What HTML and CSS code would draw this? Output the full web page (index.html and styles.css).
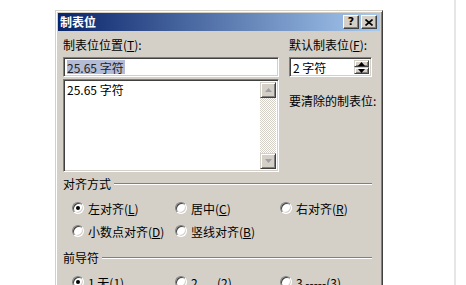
FILE: index.html
```html
<!DOCTYPE html>
<html lang="zh-CN">
<head>
  <meta charset="UTF-8">
  <title>制表位</title>
  <link rel="stylesheet" href="styles.css">
</head>
<body>
  <div class="page">
    <div class="dialog">
      <div class="titlebar">
        <span class="title">制表位</span>
        <div class="caption-btns">
          <span class="cap-btn help">?</span>
          <span class="cap-btn close">
            <svg width="8" height="7" viewBox="0 0 8 7"><path d="M0.5 0.5 L7.5 6.5 M7.5 0.5 L0.5 6.5" stroke="#000" stroke-width="1.6"/></svg>
          </span>
        </div>
      </div>

      <div class="dlg-body">
        <div class="top">
          <div class="col-left">
            <div class="label">制表位位置(<u>T</u>):</div>
            <div class="textbox"><span class="sel">25.65 字符</span></div>
            <div class="listbox">
              <div class="list-items">
                <div class="item">25.65 字符</div>
              </div>
              <div class="scrollbar">
                <span class="sb-btn">
                  <svg width="7" height="4" viewBox="0 0 7 4"><path d="M3.5 0 L7 4 L0 4 Z" fill="#a0a0a0"/></svg>
                </span>
                <span class="sb-track"></span>
                <span class="sb-btn">
                  <svg width="7" height="4" viewBox="0 0 7 4"><path d="M0 0 L7 0 L3.5 4 Z" fill="#a0a0a0"/></svg>
                </span>
              </div>
            </div>
          </div>

          <div class="col-right">
            <div class="label">默认制表位(<u>F</u>):</div>
            <div class="spinner">
              <span class="spin-value">2 字符</span>
              <div class="spin-btns">
                <span class="spin-btn">
                  <svg width="7" height="4" viewBox="0 0 7 4"><path d="M3.5 0 L7 4 L0 4 Z" fill="#000"/></svg>
                </span>
                <span class="spin-btn">
                  <svg width="7" height="4" viewBox="0 0 7 4"><path d="M0 0 L7 0 L3.5 4 Z" fill="#000"/></svg>
                </span>
              </div>
            </div>
            <div class="label clear-label">要清除的制表位:</div>
          </div>
        </div>

        <div class="group-head">
          <span class="group-title">对齐方式</span>
          <span class="etched"></span>
        </div>
        <div class="radios">
          <div class="radio"><span class="dot checked"></span>左对齐(<u>L</u>)</div>
          <div class="radio"><span class="dot"></span>居中(<u>C</u>)</div>
          <div class="radio"><span class="dot"></span>右对齐(<u>R</u>)</div>
          <div class="radio"><span class="dot"></span>小数点对齐(<u>D</u>)</div>
          <div class="radio"><span class="dot"></span>竖线对齐(<u>B</u>)</div>
        </div>

        <div class="group-head lead">
          <span class="group-title">前导符</span>
          <span class="etched"></span>
        </div>
        <div class="radios">
          <div class="radio"><span class="dot checked"></span>1 无(<u>1</u>)</div>
          <div class="radio"><span class="dot"></span>2 .....(<u>2</u>)</div>
          <div class="radio"><span class="dot"></span>3 -----(<u>3</u>)</div>
        </div>
      </div>
    </div>

    <div class="side-rule"></div>
  </div>
</body>
</html>
```

FILE: styles.css
```css
:root {
  --face: #d4d0c8;
  --shadow: #808080;
  --dark: #404040;
  --light: #fff;
}

body {
  margin: 0;
  background: #fff;
  font-family: "Noto Sans CJK SC", "DejaVu Sans", sans-serif;
  font-size: 12px;
  color: #000;
  overflow: hidden;
}

.page {
  display: flex;
  align-items: flex-start;
  height: 285px;
  padding-left: 55px;
}

.dialog {
  margin-top: 10px;
  width: 322px;
  padding: 2px;
  background: var(--face);
  border: 1px solid;
  border-color: var(--face) var(--dark) var(--dark) var(--face);
  box-shadow: inset 1px 1px var(--light), inset -1px -1px var(--shadow);
}

.titlebar {
  display: flex;
  align-items: center;
  justify-content: space-between;
  height: 18px;
  padding: 0 3px 0 2px;
  background: linear-gradient(to right, #0a246a, #a6caf0);
}

.title {
  color: #fff;
  font-weight: bold;
  line-height: 18px;
}

.caption-btns {
  display: flex;
  gap: 2px;
}

.cap-btn {
  display: flex;
  align-items: center;
  justify-content: center;
  width: 14px;
  height: 12px;
  background: var(--face);
  border: 1px solid;
  border-color: var(--light) var(--dark) var(--dark) var(--light);
  box-shadow: inset -1px -1px var(--shadow);
  font: bold 11px "DejaVu Sans", sans-serif;
  line-height: 12px;
}

.dlg-body {
  padding: 7px 8px 20px 5px;
}

.top {
  display: grid;
  grid-template-columns: 216px 83px;
  gap: 10px;
}

.label {
  line-height: 14px;
  height: 14px;
  margin-bottom: 5px;
  white-space: nowrap;
}

.sunken {
  border: 1px solid;
}

.textbox,
.spinner,
.listbox {
  box-sizing: border-box;
  background: #fff;
  border: 1px solid;
  border-color: var(--shadow) var(--light) var(--light) var(--shadow);
  box-shadow: inset 1px 1px var(--dark), inset -1px -1px var(--face);
}

.textbox {
  height: 20px;
  padding: 2px 2px 2px 3px;
  display: flex;
  align-items: stretch;
}

.sel {
  background: #b3bbd6;
  color: #222;
  line-height: 16px;
  padding-right: 1px;
}

.listbox {
  margin-top: 2px;
  height: 93px;
  padding: 2px;
  display: flex;
}

.list-items {
  flex: 1;
  padding-left: 1px;
}

.item {
  line-height: 16px;
}

.scrollbar {
  width: 16px;
  display: flex;
  flex-direction: column;
}

.sb-btn,
.spin-btn {
  box-sizing: border-box;
  display: flex;
  align-items: center;
  justify-content: center;
  background: var(--face);
  border: 1px solid;
  border-color: var(--face) var(--dark) var(--dark) var(--face);
  box-shadow: inset 1px 1px var(--light), inset -1px -1px var(--shadow);
}

.sb-btn {
  height: 16px;
}

.sb-track {
  flex: 1;
  background: repeating-conic-gradient(#fff 0 25%, var(--face) 0 50%) 0 0 / 2px 2px;
}

.spinner {
  height: 20px;
  padding: 2px;
  display: flex;
  align-items: stretch;
}

.spin-value {
  flex: 1;
  line-height: 16px;
  padding-left: 1px;
}

.spin-btns {
  width: 15px;
  display: flex;
  flex-direction: column;
}

.spin-btn {
  flex: 1;
}

.clear-label {
  margin-top: 17px;
}

.group-head {
  display: flex;
  align-items: center;
  gap: 3px;
  margin-top: 5px;
  height: 14px;
  line-height: 14px;
}

.group-head.lead {
  margin-top: 12px;
}

.etched {
  flex: 1;
  height: 0;
  border-top: 1px solid var(--shadow);
  border-bottom: 1px solid var(--light);
}

.radios {
  display: grid;
  grid-template-columns: 103px 105px auto;
  row-gap: 7px;
  margin-top: 9px;
  padding-left: 9px;
}

.radio {
  display: flex;
  align-items: center;
  height: 16px;
  white-space: nowrap;
}

.dot {
  box-sizing: border-box;
  position: relative;
  width: 12px;
  height: 12px;
  margin-right: 4px;
  border-radius: 50%;
  background: #fff;
  border: 1px solid;
  border-color: var(--shadow) var(--light) var(--light) var(--shadow);
  box-shadow: inset 1px 1px var(--dark), inset -1px -1px var(--face);
}

.dot.checked::after {
  content: "";
  position: absolute;
  left: 3px;
  top: 3px;
  width: 4px;
  height: 4px;
  border-radius: 50%;
  background: #000;
}

.side-rule {
  align-self: stretch;
  width: 2px;
  margin-left: 71px;
  background: #e6e6e6;
}
```
